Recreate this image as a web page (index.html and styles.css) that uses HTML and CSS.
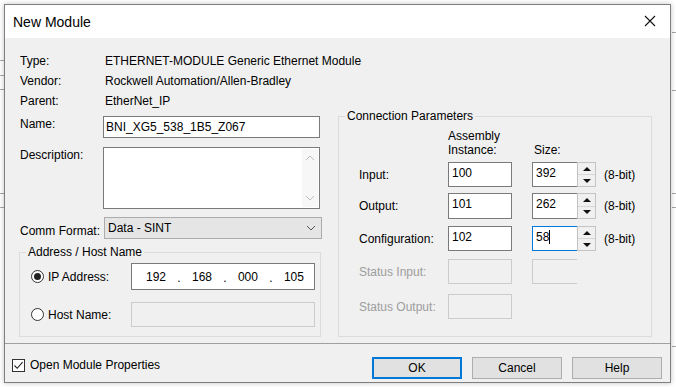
FILE: index.html
```html
<!DOCTYPE html>
<html lang="en">
<head>
    <meta charset="UTF-8">
    <title>New Module</title>
    <link rel="stylesheet" href="styles.css">
</head>
<body>

<div class="backdrop">
    <div class="bg-line" style="top: 60px; left: 0; width: 4px;"></div>
    <div class="bg-line" style="top: 75px; left: 0; width: 4px;"></div>
    <div class="bg-line" style="top: 89px; left: 0; width: 4px;"></div>
    <div class="bg-line" style="top: 193px; left: 0; width: 4px;"></div>
    <div class="bg-line" style="top: 207px; left: 0; width: 4px;"></div>
    <div class="bg-line" style="top: 32px; left: 672px; width: 4px;"></div>
    <div class="bg-line" style="top: 90px; left: 672px; width: 4px;"></div>
    <div class="bg-line" style="top: 193px; left: 672px; width: 4px;"></div>
    <div class="bg-line" style="top: 207px; left: 672px; width: 4px;"></div>
    <div class="bg-line" style="top: 346px; left: 672px; width: 4px;"></div>
</div>

<div class="dialog">
    <div class="titlebar">
        <span class="title">New Module</span>
        <svg class="close" width="12" height="12" viewBox="0 0 12 12">
            <path d="M1 1 L11 11 M11 1 L1 11" stroke="#111" stroke-width="1.1" fill="none"/>
        </svg>
    </div>

    <div class="content">
        <div class="left-col">
            <div class="info-row"><span class="info-label">Type:</span><span>ETHERNET-MODULE Generic Ethernet Module</span></div>
            <div class="info-row"><span class="info-label">Vendor:</span><span>Rockwell Automation/Allen-Bradley</span></div>
            <div class="info-row"><span class="info-label">Parent:</span><span>EtherNet_IP</span></div>

            <div class="field-row name-row">
                <label class="field-label">Name:</label>
                <div class="textbox name-box">BNI_XG5_538_1B5_Z067</div>
            </div>

            <div class="field-row desc-row">
                <label class="field-label">Description:</label>
                <div class="textbox desc-box">
                    <div class="scroll-strip">
                        <svg width="10" height="6" viewBox="0 0 10 6"><path d="M1 5 L5 1 L9 5" stroke="#bcbcbc" fill="none"/></svg>
                        <svg width="10" height="6" viewBox="0 0 10 6"><path d="M1 1 L5 5 L9 1" stroke="#bcbcbc" fill="none"/></svg>
                    </div>
                </div>
            </div>

            <div class="field-row format-row">
                <label class="field-label">Comm Format:</label>
                <div class="combo">
                    <span>Data - SINT</span>
                    <svg width="10" height="6" viewBox="0 0 10 6"><path d="M1 1 L5 5 L9 1" stroke="#555" fill="none"/></svg>
                </div>
            </div>

            <fieldset class="group address-group">
                <legend>Address / Host Name</legend>
                <div class="group-body">
                    <div class="addr-row ip-row">
                        <span class="radio checked"></span>
                        <span class="addr-label">IP Address:</span>
                        <div class="textbox ip-box">
                            <span class="octet">192</span><span class="dot">.</span>
                            <span class="octet">168</span><span class="dot">.</span>
                            <span class="octet">000</span><span class="dot">.</span>
                            <span class="octet">105</span>
                        </div>
                    </div>
                    <div class="addr-row host-row">
                        <span class="radio"></span>
                        <span class="addr-label">Host Name:</span>
                        <div class="textbox disabled host-box"></div>
                    </div>
                </div>
            </fieldset>
        </div>

        <fieldset class="group conn-group">
            <legend>Connection Parameters</legend>
            <div class="group-body">
                <div class="cp-head">
                    <span class="cp-label"></span>
                    <span class="cp-inst">Assembly<br>Instance:</span>
                    <span class="cp-size-head">Size:</span>
                </div>
                <div class="cp-row" id="row-input">
                    <span class="cp-label">Input:</span>
                    <div class="textbox cp-inst">100</div>
                    <div class="size-box"><div class="textbox size-field">392</div><div class="spinner"><span class="up"></span><span class="down"></span></div></div>
                    <span class="unit">(8-bit)</span>
                </div>
                <div class="cp-row" id="row-output">
                    <span class="cp-label">Output:</span>
                    <div class="textbox cp-inst">101</div>
                    <div class="size-box"><div class="textbox size-field">262</div><div class="spinner"><span class="up"></span><span class="down"></span></div></div>
                    <span class="unit">(8-bit)</span>
                </div>
                <div class="cp-row" id="row-config">
                    <span class="cp-label">Configuration:</span>
                    <div class="textbox cp-inst">102</div>
                    <div class="size-box"><div class="textbox size-field focused">58<span class="caret"></span></div><div class="spinner"><span class="up"></span><span class="down"></span></div></div>
                    <span class="unit">(8-bit)</span>
                </div>
                <div class="cp-row" id="row-status-in">
                    <span class="cp-label muted">Status Input:</span>
                    <div class="textbox disabled cp-inst"></div>
                    <div class="textbox disabled size-open"></div>
                </div>
                <div class="cp-row" id="row-status-out">
                    <span class="cp-label muted">Status Output:</span>
                    <div class="textbox disabled cp-inst"></div>
                </div>
            </div>
        </fieldset>
    </div>

    <div class="footer">
        <label class="check-wrap">
            <span class="checkbox">
                <svg width="11" height="11" viewBox="0 0 11 11"><path d="M1.5 5.5 L4.2 8.3 L9.6 2.2" stroke="#222" stroke-width="1.1" fill="none"/></svg>
            </span>
            Open Module Properties
        </label>
        <div class="buttons">
            <button class="btn default">OK</button>
            <button class="btn">Cancel</button>
            <button class="btn">Help</button>
        </div>
    </div>
</div>

</body>
</html>
```

FILE: styles.css
```css
body {
    margin: 0;
    background-color: #ffffff;
    font-family: "Liberation Sans", Arial, sans-serif;
    font-size: 12px;
    color: #000;
    position: relative;
    height: 387px;
    overflow: hidden;
}
.backdrop {
    position: absolute;
    inset: 0;
}
.bg-line {
    position: absolute;
    height: 1px;
    background-color: #a8a8a8;
}
.dialog {
    position: relative;
    margin: 4px 0 0 4px;
    width: 667px;
    height: 379px;
    box-sizing: border-box;
    border: 1px solid #7f7f7f;
    box-shadow: 0 0 5px rgba(0, 0, 0, 0.25);
    background-color: #f0f0f0;
    display: flex;
    flex-direction: column;
}
.titlebar {
    height: 33px;
    background-color: #fff;
    display: flex;
    align-items: center;
    justify-content: space-between;
    padding: 0 14px 0 8px;
}
.title {
    font-size: 14px;
    margin-top: 1px;
}
.close {
    margin-top: -1px;
}
.content {
    height: 305px;
    display: flex;
    align-items: flex-start;
    padding-left: 14px;
    box-sizing: border-box;
}
.left-col {
    width: 303px;
    flex-shrink: 0;
    padding-top: 13px;
}
.info-row {
    display: flex;
    height: 20px;
    align-items: center;
    white-space: nowrap;
}
.info-label {
    width: 85px;
    flex-shrink: 0;
    padding-left: 1px;
}
.field-row {
    display: flex;
}
.field-label {
    width: 84px;
    padding-left: 1px;
    box-sizing: border-box;
    line-height: 16px;
}
.textbox {
    background-color: #fff;
    border: 1px solid #7a7a7a;
    box-sizing: border-box;
    line-height: 18px;
    padding: 0 2px;
    white-space: nowrap;
}
.textbox.disabled {
    background-color: #f0f0f0;
    border-color: #cccccc;
}
.name-row {
    margin-top: 5px;
}
.name-box {
    width: 217px;
    height: 22px;
    line-height: 20px;
}
.desc-row {
    margin-top: 9px;
}
.desc-box {
    width: 217px;
    height: 62px;
    display: flex;
    justify-content: flex-end;
    padding: 1px;
}
.scroll-strip {
    width: 16px;
    background-color: #f7f7f7;
    display: flex;
    flex-direction: column;
    justify-content: space-between;
    align-items: center;
    padding: 6px 0;
}
.format-row {
    margin-top: 8px;
    align-items: flex-end;
}
.format-row .field-label {
    width: 85px;
}
.combo {
    width: 218px;
    height: 22px;
    box-sizing: border-box;
    background-color: #e5e5e5;
    border: 1px solid #acacac;
    display: flex;
    align-items: center;
    justify-content: space-between;
    padding: 0 5px 0 3px;
}
.group {
    margin: 0;
    border: 1px solid #dcdcdc;
    padding: 0;
    box-sizing: border-box;
    min-width: 0;
}
.group legend {
    margin-left: 6px;
    padding: 0 2px;
    line-height: 14px;
}
.address-group {
    margin-top: 6px;
    width: 302px;
}
.address-group .group-body {
    padding: 4px 0 9px 11px;
}
.addr-row {
    display: flex;
    align-items: center;
}
.ip-row {
    height: 27px;
}
.host-row {
    height: 25px;
    margin-top: 12px;
}
.radio {
    width: 13px;
    height: 13px;
    flex-shrink: 0;
    box-sizing: border-box;
    border: 1px solid #333;
    border-radius: 50%;
    background-color: #fff;
    position: relative;
}
.radio.checked::after {
    content: "";
    position: absolute;
    left: 2px;
    top: 2px;
    width: 7px;
    height: 7px;
    border-radius: 50%;
    background-color: #222;
}
.addr-label {
    width: 87px;
    box-sizing: border-box;
    padding-left: 4px;
}
.ip-box {
    width: 184px;
    height: 27px;
    display: flex;
    align-items: center;
    padding: 0 10px 0 14px;
    justify-content: space-between;
}
.ip-box .dot {
    margin-top: 3px;
}
.host-box {
    width: 184px;
    height: 25px;
}
.conn-group {
    margin-top: 71px;
    margin-left: 16px;
    width: 314px;
    height: 228px;
}
.conn-group .group-body {
    padding: 6px 0 0 20px;
}
.cp-head {
    display: flex;
    line-height: 14px;
}
.cp-label {
    width: 89px;
}
.cp-label.muted {
    color: #9d9d9d;
}
.cp-inst {
    width: 64px;
}
.cp-head .cp-inst {
    width: 86px;
}
.cp-size-head {
    margin-top: 14px;
}
.cp-row {
    display: flex;
    align-items: center;
    height: 25px;
}
.cp-row .cp-inst {
    height: 25px;
    line-height: 20px;
    padding-left: 3px;
}
#row-input { margin-top: 5px; }
#row-output { margin-top: 6px; height: 26px; }
#row-output .cp-inst { height: 26px; }
#row-config { margin-top: 7px; }
#row-status-in { margin-top: 8px; }
#row-status-out { margin-top: 10px; }
.size-box {
    display: flex;
    margin-left: 20px;
    height: 100%;
}
.size-field {
    width: 45px;
    height: 100%;
    line-height: 20px;
    padding-left: 3px;
    border-right: none;
}
.size-field.focused {
    border-color: #0078d7;
}
.caret {
    display: inline-block;
    width: 1px;
    height: 14px;
    background-color: #000;
    vertical-align: -3px;
}
.spinner {
    width: 19px;
    height: 100%;
    box-sizing: border-box;
    border: 1px solid #c4c4c4;
    background-color: #f0f0f0;
    display: flex;
    flex-direction: column;
}
.spinner span {
    flex: 1;
    display: flex;
    align-items: center;
    justify-content: center;
}
.spinner .up {
    border-bottom: 1px solid #d6d6d6;
}
.spinner .up::before {
    content: "";
    border-left: 4px solid transparent;
    border-right: 4px solid transparent;
    border-bottom: 4px solid #111;
}
.spinner .down::before {
    content: "";
    border-left: 4px solid transparent;
    border-right: 4px solid transparent;
    border-top: 4px solid #111;
}
.unit {
    margin-left: 8px;
}
.size-open {
    margin-left: 20px;
    width: 45px;
    height: 25px;
    border-right: none;
}
.footer {
    flex: 1;
    border-top: 1px solid #a0a0a0;
    display: flex;
    align-items: center;
    justify-content: space-between;
    padding: 0 8px 0 7px;
}
.check-wrap {
    display: flex;
    align-items: center;
    gap: 5px;
    margin-top: 4px;
}
.checkbox {
    width: 13px;
    height: 13px;
    box-sizing: border-box;
    border: 1px solid #333;
    background-color: #fff;
    display: flex;
    align-items: center;
    justify-content: center;
}
.buttons {
    display: flex;
    gap: 10px;
    margin-top: 10px;
}
.btn {
    width: 90px;
    height: 22px;
    font-family: "Liberation Sans", Arial, sans-serif;
    font-size: 12px;
    background-color: #e1e1e1;
    border: 1px solid #adadad;
    padding: 0;
}
.btn.default {
    border: 2px solid #0078d7;
}
```
